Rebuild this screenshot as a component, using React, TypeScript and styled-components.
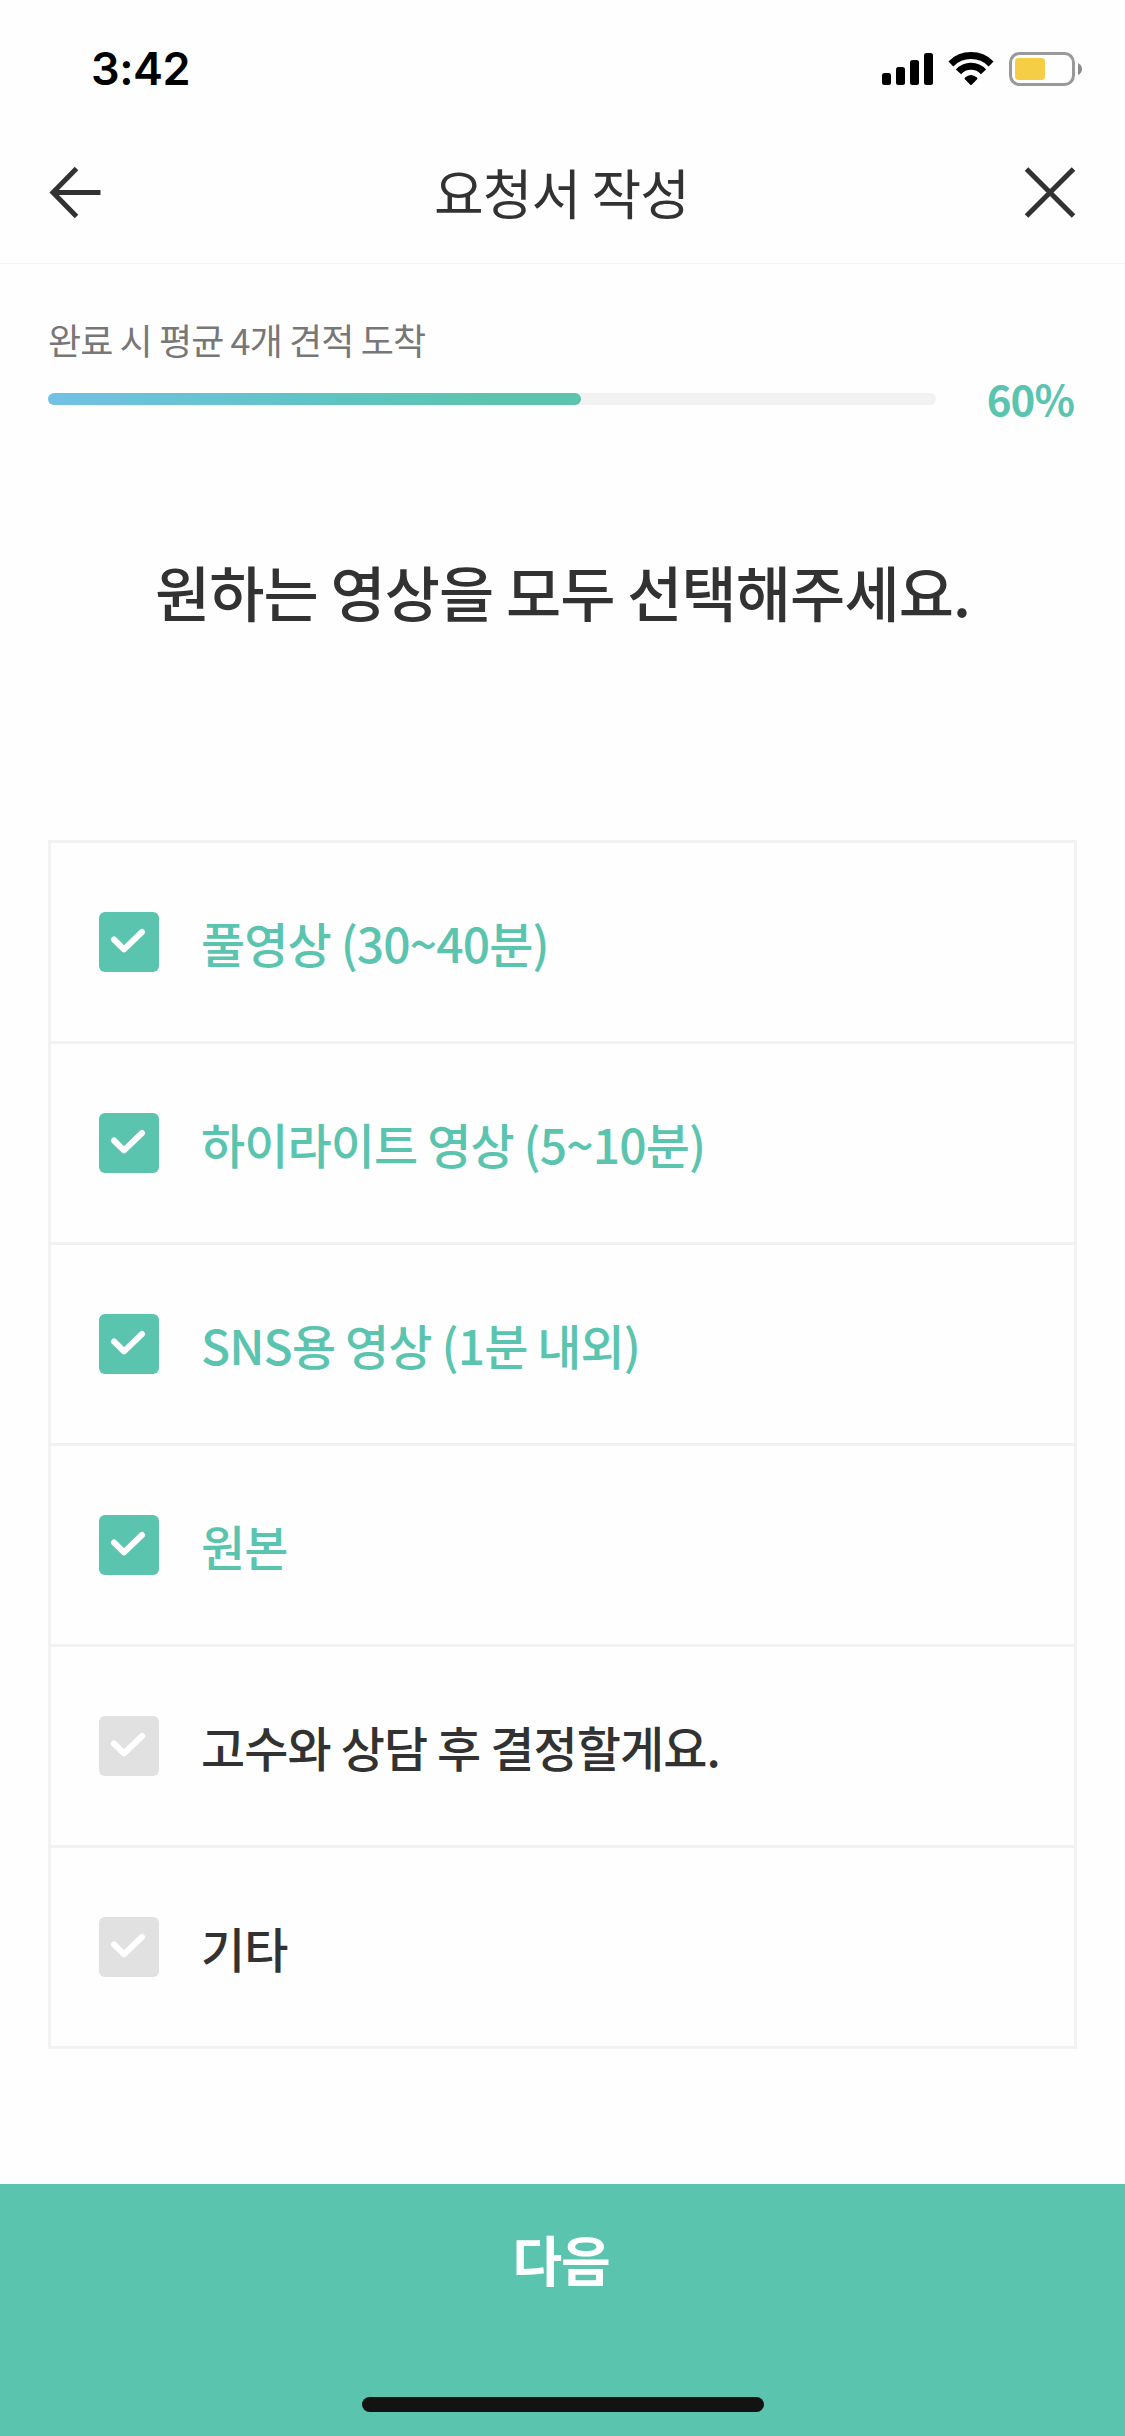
import React, { useState } from "react";
import styled, { createGlobalStyle } from "styled-components";

const GREEN = "#5bc4af";
const INK = "#323232";
const LINE = "#f2f2f2";

const GlobalStyle = createGlobalStyle`
  * { box-sizing: border-box; }
  body { margin: 0; background: #fff; }
`;

const Screen = styled.div`
  width: 1125px;
  height: 2436px;
  display: flex;
  flex-direction: column;
  background: #fefefe;
  color: ${INK};
  font-family: "Noto Sans CJK KR", "Noto Sans", sans-serif;
  letter-spacing: -0.9px;
  overflow: hidden;
`;

const StatusBar = styled.div`
  height: 120px;
  flex: none;
  display: flex;
  justify-content: space-between;
  align-items: flex-start;
  padding: 42px 42px 0 91px;
`;

const Time = styled.span`
  font: 600 45px/54px Inter, sans-serif;
  letter-spacing: -0.45px;
  color: #000;
`;

const StatusIcons = styled.svg`
  display: block;
  width: 202px;
  height: 36px;
  margin-top: 9px;
`;

const Header = styled.header`
  height: 144px;
  flex: none;
  display: flex;
  align-items: center;
  justify-content: space-between;
  padding: 0 48px;
  border-bottom: 1px solid ${LINE};
`;

const IconButton = styled.button`
  width: 54px;
  height: 54px;
  padding: 0;
  border: 0;
  background: none;
  svg { display: block; }
`;

const Title = styled.h1`
  margin: 0;
  padding-right: 2px;
  font-size: 54px;
  font-weight: 400;
  line-height: 80px;
`;

const Progress = styled.section`
  flex: none;
  padding: 48px 51px 0 48px;
`;

const ProgressNote = styled.p`
  margin: 0;
  font-size: 36px;
  line-height: 54px;
  color: #777;
`;

const ProgressRow = styled.div`
  height: 66px;
  display: flex;
  align-items: center;
  justify-content: space-between;
`;

const Track = styled.div`
  width: 888px;
  height: 12px;
  border-radius: 6px;
  background: ${LINE};
`;

const Fill = styled.div`
  height: 12px;
  border-radius: 6px;
  background: linear-gradient(90deg, #72c1e4, #5fc4c4 50%, #5bc4ad 85%);
`;

const Percent = styled.span`
  padding-bottom: 2px;
  font-size: 42px;
  font-weight: 700;
  line-height: 60px;
  color: ${GREEN};
`;

const Question = styled.h2`
  flex: none;
  margin: 115px 0 206px;
  text-align: center;
  font-size: 60px;
  font-weight: 500;
  line-height: 87px;
`;

const Options = styled.ul`
  flex: none;
  margin: 0 48px;
  padding: 0;
  list-style: none;
  border: 3px solid ${LINE};
`;

const Option = styled.li<{ $on: boolean }>`
  height: 201px;
  display: flex;
  align-items: center;
  gap: 42px;
  padding-left: 48px;
  border-bottom: 3px solid ${LINE};
  font-size: 48px;
  font-weight: 500;
  line-height: 72px;
  color: ${(p) => (p.$on ? GREEN : INK)};
  &:last-child { height: 198px; border-bottom: 0; }
`;

const CheckBox = styled.span<{ $on: boolean }>`
  width: 60px;
  height: 60px;
  border-radius: 6px;
  background: ${(p) => (p.$on ? GREEN : "#e1e1e1")};
  svg { display: block; }
`;

const Footer = styled.footer`
  height: 252px;
  margin-top: auto;
  flex: none;
  display: flex;
  flex-direction: column;
  align-items: center;
  justify-content: space-between;
  padding-bottom: 24px;
  background: ${GREEN};
`;

const NextButton = styled.button`
  width: 100%;
  height: 150px;
  padding: 0 3px 0 0;
  border: 0;
  background: none;
  color: #fff;
  font-family: inherit;
  font-size: 54px;
  font-weight: 700;
  line-height: 80px;
  letter-spacing: -1.2px;
`;

const HomeIndicator = styled.div`
  width: 402px;
  height: 15px;
  border-radius: 8px;
  background: #131313;
`;

const OPTIONS = [
  "풀영상 (30~40분)",
  "하이라이트 영상 (5~10분)",
  "SNS용 영상 (1분 내외)",
  "원본",
  "고수와 상담 후 결정할게요.",
  "기타",
];

export default function App() {
  const [picked, setPicked] = useState([true, true, true, true, false, false]);
  const percent = 60;
  const toggle = (i: number) => setPicked(picked.map((v, n) => (n === i ? !v : v)));

  return (
    <>
      <GlobalStyle />
      <Screen>
        <StatusBar>
          <Time>3:42</Time>
          <StatusIcons viewBox="0 0 202 36">
            <rect x="1" y="22" width="9" height="12" rx="2.5" />
            <rect x="15" y="16" width="9" height="18" rx="2.5" />
            <rect x="29" y="9" width="9" height="25" rx="2.5" />
            <rect x="43" y="2" width="9" height="32" rx="2.5" />
            <g fill="none" stroke="#000" strokeWidth="7">
              <path d="M69.9 12.9 A28.5 28.5 0 0 1 110.1 12.9" />
              <path d="M77.5 20.9 A16.8 16.8 0 0 1 102.5 20.9" />
            </g>
            <path d="M84 26.6 Q90 21.2 96 26.6 Q96.9 27.5 96.1 28.3 L90.7 33.8 Q90 34.4 89.3 33.8 L83.9 28.3 Q83.1 27.5 84 26.6Z" />
            <rect x="129.5" y="2.5" width="63" height="31" rx="9" fill="none" stroke="#999" strokeWidth="3" />
            <rect x="134" y="7" width="30" height="22" rx="3.5" fill="#f6ce46" />
            <path d="M197 12 Q201 14 201 18 Q201 22 197 24Z" fill="#8c8c8c" />
          </StatusIcons>
        </StatusBar>

        <Header>
          <IconButton aria-label="뒤로">
            <svg width="54" height="54" viewBox="0 0 54 54" fill="none" stroke={INK} strokeWidth="5">
              <path d="M28.5 3.5 L5 27.5 L28.5 51.5 M5 27.5 H52.5" />
            </svg>
          </IconButton>
          <Title>요청서 작성</Title>
          <IconButton aria-label="닫기">
            <svg width="54" height="54" viewBox="0 0 54 54" fill="none" stroke={INK} strokeWidth="5">
              <path d="M3.5 4 L50.5 51 M50.5 4 L3.5 51" />
            </svg>
          </IconButton>
        </Header>

        <Progress>
          <ProgressNote>완료 시 평균 4개 견적 도착</ProgressNote>
          <ProgressRow>
            <Track>
              <Fill style={{ width: `${percent}%` }} />
            </Track>
            <Percent>{percent}%</Percent>
          </ProgressRow>
        </Progress>

        <Question>원하는 영상을 모두 선택해주세요.</Question>

        <Options>
          {OPTIONS.map((label, i) => (
            <Option key={label} $on={picked[i]} onClick={() => toggle(i)}>
              <CheckBox $on={picked[i]}>
                <svg width="60" height="60" viewBox="0 0 60 60" fill="none" stroke="#fff" strokeWidth="6" strokeLinecap="round" strokeLinejoin="round">
                  <path d="M15 27.5 L25 37.3 L43 20" />
                </svg>
              </CheckBox>
              {label}
            </Option>
          ))}
        </Options>

        <Footer>
          <NextButton>다음</NextButton>
          <HomeIndicator />
        </Footer>
      </Screen>
    </>
  );
}
